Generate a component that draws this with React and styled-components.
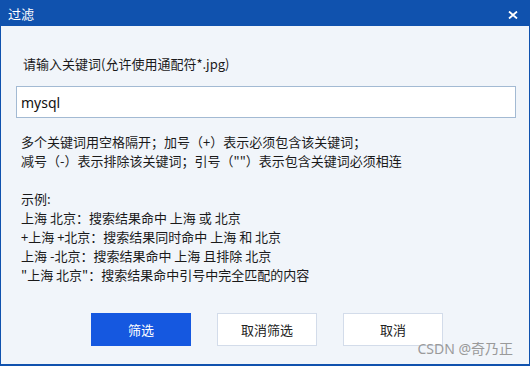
import React from "react";
import styled, { createGlobalStyle } from "styled-components";

const GlobalStyle = createGlobalStyle`
  html, body {
    margin: 0;
    padding: 0;
    background: #f1f5fa;
  }
  body {
    font-family: "Noto Sans CJK SC", "Noto Sans", "Liberation Sans", sans-serif;
  }
`;

const App = () => {
  return (
    <>
      <GlobalStyle />
      <Dialog>
        <TitleBar>
          <Title>过滤</Title>
          <CloseBtn>
            <svg width="10" height="8" viewBox="0 0 10 8">
              <path d="M1 0.5 L9 7.5 M9 0.5 L1 7.5" stroke="#fff" strokeWidth="1.8" />
            </svg>
          </CloseBtn>
        </TitleBar>
        <Body>
          <Label>请输入关键词(允许使用通配符*.jpg)</Label>
          <Input defaultValue="mysql" />
          <Help>
            <p>多个关键词用空格隔开；加号（+）表示必须包含该关键词；</p>
            <p>减号（-）表示排除该关键词；引号（""）表示包含关键词必须相连</p>
            <Blank />
            <p>示例:</p>
            <p>上海 北京：搜索结果命中 上海 或 北京</p>
            <p>+上海 +北京：搜索结果同时命中 上海 和 北京</p>
            <p>上海 -北京：搜索结果命中 上海 且排除 北京</p>
            <p>"上海 北京"：搜索结果命中引号中完全匹配的内容</p>
          </Help>
          <Buttons>
            <Button primary>筛选</Button>
            <Button>取消筛选</Button>
            <Button>取消</Button>
          </Buttons>
        </Body>
        <Watermark>CSDN @奇乃正</Watermark>
      </Dialog>
    </>
  );
};

const Dialog = styled.div`
  position: relative;
  width: 530px;
  height: 366px;
  box-sizing: border-box;
  border: 1px solid #1052ae;
  border-top: none;
  border-bottom-width: 2px;
  background: #f1f5fa;
  display: flex;
  flex-direction: column;
`;

const TitleBar = styled.div`
  height: 26px;
  margin: 0 -1px;
  background: #1052ae;
  display: flex;
  align-items: center;
  justify-content: space-between;
  padding: 0 12px 0 8px;
`;

const Title = styled.span`
  color: #fff;
  font-size: 13px;
  line-height: 26px;
  padding-top: 2px;
`;

const CloseBtn = styled.span`
  display: flex;
  align-items: center;
  padding-top: 4px;
`;

const Body = styled.div`
  flex: 1;
  padding: 28px 14px 0 15px;
  display: flex;
  flex-direction: column;
`;

const Label = styled.div`
  font-size: 13px;
  line-height: 19px;
  color: #1a1a1a;
  padding-left: 7px;
`;

const Input = styled.input`
  margin-top: 13px;
  width: 500px;
  height: 32px;
  box-sizing: border-box;
  border: 1px solid #a3bad3;
  background: #fff;
  padding: 0 4px;
  font-family: "Noto Sans", "Liberation Sans", sans-serif;
  font-size: 14px;
  color: #111;
  outline: none;
`;

const Help = styled.div`
  margin-top: 14px;
  padding-left: 5px;
  font-size: 13px;
  line-height: 19px;
  color: #1a1a1a;

  p {
    margin: 0;
    white-space: pre;
  }
`;

const Blank = styled.div`
  height: 19px;
`;

const Buttons = styled.div`
  margin-top: 29px;
  padding-left: 75px;
  display: flex;
  gap: 26px;
`;

const Button = styled.button`
  width: 100px;
  height: 33px;
  box-sizing: border-box;
  border: 1px solid ${(p) => (p.primary ? "#1558e0" : "#d3dcea")};
  background: ${(p) => (p.primary ? "#1558e0" : "#fff")};
  color: ${(p) => (p.primary ? "#fff" : "#222")};
  font-family: "Noto Sans CJK SC", sans-serif;
  font-size: 13px;
  padding: 0;
  cursor: pointer;
`;

const Watermark = styled.div`
  position: absolute;
  right: 16px;
  bottom: 6px;
  font-family: "Noto Sans", "Noto Sans CJK SC", sans-serif;
  font-size: 14px;
  color: #9a9a9a;
`;

export default App;
